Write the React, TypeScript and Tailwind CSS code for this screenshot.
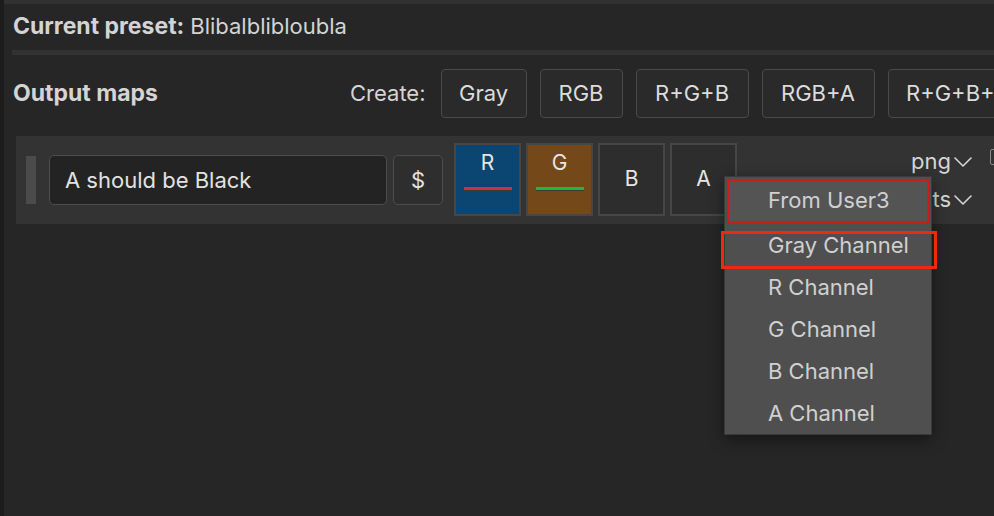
import React from "react";

const createButtons = [
  { label: "Gray", w: "w-[86px]" },
  { label: "RGB", w: "w-[83px]" },
  { label: "R+G+B", w: "w-[113px]" },
  { label: "RGB+A", w: "w-[113px]" },
  { label: "R+G+B+A", w: "w-[140px]" },
];

const channels = ["R Channel", "G Channel", "B Channel", "A Channel"];

const Chevron = () => (
  <svg width="18" height="10" viewBox="0 0 18 10" className="ml-[3px] mt-[2px]">
    <polyline
      points="1,1 9,9 17,1"
      fill="none"
      stroke="#d6d6d6"
      strokeWidth="1.6"
      strokeLinecap="round"
      strokeLinejoin="round"
    />
  </svg>
);

const ChannelTile = ({
  letter,
  bg,
  line,
}: {
  letter: string;
  bg: string;
  line?: string;
}) => (
  <div
    className={`w-[67px] h-[73px] shrink-0 border-2 border-[#464646] flex flex-col items-center ${
      line ? "justify-start pt-[6px]" : "justify-center"
    } ${bg}`}
  >
    <span className="text-[21px] leading-[24px] text-[#e6e6e6]">{letter}</span>
    {line && (
      <div className="mt-[12px] w-[48px] h-[4px] flex flex-col">
        <div className={`h-[3px] ${line}`} />
        <div className="h-[1px] bg-[#3a3a3a]" />
      </div>
    )}
  </div>
);

const App = () => {
  return (
    <div className="w-[994px] h-[516px] overflow-hidden flex bg-[#1c1c1c] font-['Inter','Liberation_Sans',sans-serif] text-[#d6d6d6]">
      <div className="w-[4px] shrink-0" />
      <div className="flex-1 min-w-0 flex flex-col bg-[#262626]">
        <div className="h-[4px] bg-[#313131]" />
        <div className="h-[44px] pl-[9px] flex items-center text-[22px] whitespace-nowrap">
          <span className="font-bold text-[23px] text-[#d4d4d4]">Current preset:</span>
          <span className="ml-[6px] text-[#d4d4d4]">Blibalblibloubla</span>
        </div>
        <div className="mt-[2px] ml-[8px] h-[5px] bg-[#323232]" />

        <div className="mt-[14px] h-[49px] pl-[9px] flex items-center whitespace-nowrap">
          <span className="w-[337px] shrink-0 text-[23px] font-bold text-[#d4d4d4]">
            Output maps
          </span>
          <span className="text-[22px] text-[#d4d4d4]">Create:</span>
          <div className="ml-[15px] flex gap-[13px]">
            {createButtons.map((b) => (
              <button
                key={b.label}
                className={`${b.w} h-[49px] shrink-0 rounded-[4px] border border-[#4a4a4a] bg-[#2a2a2a] text-[22px] text-[#dcdcdc] text-center`}
              >
                {b.label}
              </button>
            ))}
          </div>
        </div>

        <div className="relative mt-[18px] ml-[12px] h-[88px] bg-[#333333] flex items-center pl-[10px] whitespace-nowrap">
          <div className="w-[10px] h-[48px] bg-[#4b4b4b] shrink-0" />
          <div className="ml-[13px] w-[338px] h-[50px] shrink-0 rounded-[5px] border border-[#4d4d4d] bg-[#232323] flex items-center pl-[15px] text-[22px] text-[#e2e2e2]">
            A should be Black
          </div>
          <div className="ml-[6px] w-[50px] h-[50px] shrink-0 rounded-[5px] border border-[#4d4d4d] bg-[#2e2e2e] flex items-center justify-center text-[22px] text-[#e2e2e2]">
            $
          </div>
          <div className="ml-[11px] -mt-[2px] flex gap-[5px]">
            <ChannelTile letter="R" bg="bg-[#0b4571]" line="bg-[#c8343e]" />
            <ChannelTile letter="G" bg="bg-[#744818]" line="bg-[#1fb82e]" />
            <ChannelTile letter="B" bg="bg-[#2d2d2d]" />
            <ChannelTile letter="A" bg="bg-[#2d2d2d]" />
          </div>
          <div className="ml-auto -mr-[12px] flex items-start shrink-0">
            <div className="flex flex-col items-end gap-[12px] text-[22px] text-[#d6d6d6]">
              <div className="flex items-center h-[26px]">
                png
                <Chevron />
              </div>
              <div className="flex items-center h-[26px]">
                8 bits
                <Chevron />
              </div>
            </div>
            <div className="ml-[18px] mt-[1px] w-[16px] h-[16px] border border-[#8a8a8a] rounded-[2px] shrink-0" />
          </div>

          <div className="absolute left-[708px] top-[40px] w-[208px] h-[259px] bg-[#4f4f4f] border border-[#3a3a3a] shadow-[0_4px_14px_rgba(0,0,0,0.45)] pt-[2px] px-[2px] flex flex-col text-[22px] text-[#d0d0d0]">
            <div className="h-[44px] border-2 border-[#cc1b1b] bg-[#545454] flex items-center pl-[39px]">
              From User3
            </div>
            <div className="relative h-[42px] mt-[2px] flex items-center pl-[41px]">
              <div className="absolute -left-[6px] -right-[8px] top-[6px] h-[38px] border-[3px] border-[#f0290c]" />
              Gray Channel
            </div>
            {channels.map((c) => (
              <div key={c} className="h-[42px] flex items-center pl-[41px]">
                {c}
              </div>
            ))}
          </div>
        </div>
      </div>
    </div>
  );
};

export default App;
